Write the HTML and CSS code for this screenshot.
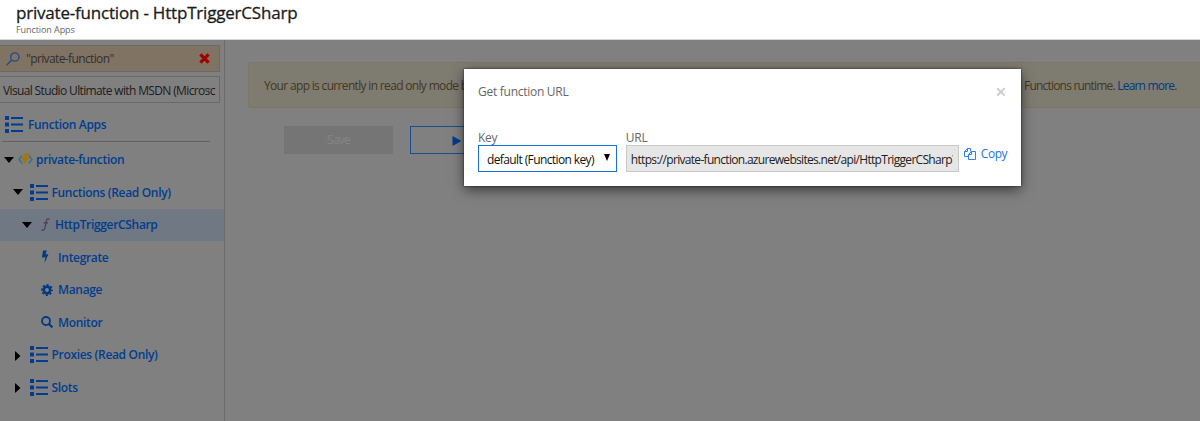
FILE: index.html
```html
<!DOCTYPE html>
<html lang="en">
<head>
<meta charset="utf-8">
<title>private-function - HttpTriggerCSharp</title>
<link rel="stylesheet" href="styles.css">
</head>
<body>
<svg width="0" height="0" class="defs">
  <symbol id="list" viewBox="0 0 18 17"><path d="M0 0h4v4H0zM0 6.5h4v4H0zM0 13h4v4H0zM6 1h12v2H6zM6 7.5h12v2H6zM6 14h12v2H6z" fill="currentColor"/></symbol>
</svg>
<header class="header">
  <h1 class="title">private-function - HttpTriggerCSharp</h1>
  <div class="subtitle">Function Apps</div>
</header>
<div class="body">
  <nav class="sidebar">
    <div class="search">
      <svg class="search-icon" width="14" height="14" viewBox="0 0 14 14" fill="none" stroke="#1d4c8c" stroke-width="1.3"><circle cx="8.8" cy="5" r="4.2"/><path d="M5.8 8L.5 13.2"/></svg>
      <span class="search-text">"private-function"</span>
      <svg class="clear" width="11" height="11" viewBox="0 0 10 10"><path d="M1.300 1.300l7.400 7.400M8.700 1.300l-7.400 7.400" stroke="#a30000" stroke-width="3"/></svg>
    </div>
    <div class="subs"><span class="subs-text">Visual Studio Ultimate with MSDN (Microsc</span><svg class="chev" width="8" height="6" viewBox="0 0 8 6"><path d="M.5 1L4 4.5 7.5 1" fill="none" stroke="#5d5d5d" stroke-width="1.200"/></svg></div>
    <div class="apps"><svg class="list" width="18" height="17"><use href="#list"/></svg><span class="label">Function Apps</span></div>
    <div class="row l1"><svg class="down" width="10" height="6" viewBox="0 0 10 6"><path d="M0 0h10L5 6z"/></svg>
      <svg class="bolt" width="15" height="13" viewBox="0 0 15 13"><path d="M4.200 2.500L.9 6.500l3.300 4M10.800 2.500l3.300 4-3.300 4" fill="none" stroke="#2b7687" stroke-width="1.400"/><path d="M7 0h4.300L8.500 4.800h3L4 13l2.300-5.600H3.500z" fill="#a87405"/></svg><span class="label">private-function</span></div>
    <div class="row l2"><svg class="down" width="10" height="6" viewBox="0 0 10 6"><path d="M0 0h10L5 6z"/></svg><svg class="list" width="18" height="17"><use href="#list"/></svg><span class="label">Functions (Read Only)</span></div>
    <div class="row l3 selected"><svg class="down" width="10" height="6" viewBox="0 0 10 6"><path d="M0 0h10L5 6z"/></svg><svg class="fx" width="9" height="13" viewBox="0 0 9 13" fill="none" stroke="#543568" stroke-width="1.2"><path d="M8.500 1.500C7 0 5.700 1 5.300 3L4 9.500C3.600 11.700 2.200 13 .5 11.800M2.500 4.800h4.500"/></svg><span class="label">HttpTriggerCSharp</span></div>
    <div class="row l4"><svg width="12" height="14" viewBox="0 0 12 14"><path d="M2 .5h3.800L4.500 4.500l3-.6L3.600 13l.7-6L1 7.800z" fill="#003a83"/></svg><span class="label">Integrate</span></div>
    <div class="row l4"><svg width="12" height="12" viewBox="0 0 12 12" fill="none" stroke="#003a83"><circle cx="6" cy="6" r="3.200" stroke-width="2.600"/><circle cx="6" cy="6" r="5" stroke-width="1.800" stroke-dasharray="2.200 1.727" stroke-dashoffset="1.100"/></svg><span class="label">Manage</span></div>
    <div class="row l4"><svg width="12" height="12" viewBox="0 0 12 12" fill="none" stroke="#003a83" stroke-width="1.800"><circle cx="5" cy="5" r="4"/><path d="M8 8l3.400 3.400" stroke-width="2.200"/></svg><span class="label">Monitor</span></div>
    <div class="row l2"><svg class="right" width="6" height="10" viewBox="0 0 6 10"><path d="M0 0v10l5.500-5z"/></svg><svg class="list" width="18" height="17"><use href="#list"/></svg><span class="label">Proxies (Read Only)</span></div>
    <div class="row l2"><svg class="right" width="6" height="10" viewBox="0 0 6 10"><path d="M0 0v10l5.500-5z"/></svg><svg class="list" width="18" height="17"><use href="#list"/></svg><span class="label">Slots</span></div>
  </nav>
  <main class="main">
    <div class="banner"><span class="lead">Your app is currently in read only mode b</span><span class="runtime">Functions runtime. <a>Learn more</a>.</span></div>
    <div class="buttons"><div class="save">Save</div><div class="run"><svg width="10" height="10" viewBox="0 0 10 10"><path d="M.5 0v10L9.500 5z" fill="#003c8c"/></svg></div></div>
  </main>
</div>
<section class="modal">
  <div class="modal-head"><span>Get function URL</span><svg width="10" height="10" viewBox="0 0 10 10"><path d="M1.200 1.200l7.400 7.400M8.600 1.200L1.200 8.600" stroke="#c9c9c9" stroke-width="1.800"/></svg></div>
  <div class="fields">
    <div class="key"><label>Key</label><div class="select"><span>default (Function key)</span><svg width="6" height="7" viewBox="0 0 6 7"><path d="M0 0h6L3 7z"/></svg></div></div>
    <div class="url"><label>URL</label><div class="input"><span>https://private-function.azurewebsites.net/api/HttpTriggerCSharp?</span></div></div>
    <a class="copy"><svg width="12" height="12" viewBox="0 0 12 12" fill="none" stroke="#2f80ed"><path d="M4.500 8.500h-4v-5l3-3h3v3M3.500.5v3h-3M4.500 11.500v-5l3-3h4v8zM7.500 3.500v3h-3"/></svg><span>Copy</span></a>
  </div>
</section>
</body>
</html>
```
FILE: styles.css
```css
* { box-sizing: border-box; }
body { margin: 0; width: 1200px; height: 421px; overflow: hidden; background: #808080; font: 12px/16px "Open Sans", "Noto Sans", sans-serif; }
svg { display: block; flex: none; }
span { white-space: pre; }
.defs { position: absolute; }
.header { height: 40px; padding: 2px 16px 0; background: #fff; border-bottom: 1px solid #d4d4d4; }
.title { margin: 0; font-size: 17px; line-height: 22px; font-weight: 500; letter-spacing: -.2px; color: #1b1b1b; -webkit-text-stroke: .3px #1b1b1b; }
.subtitle { font-size: 9px; line-height: 11px; letter-spacing: -.08px; color: #666; }
.body { display: flex; height: 381px; }
.sidebar { width: 225px; flex: none; border-right: 1px solid #6c6c6c; padding-top: 5px; color: #003d8f; font-weight: 600; }
.search, .subs { width: 220px; height: 27px; border: 1px solid #696969; border-left: 0; display: flex; align-items: center; }
.search { background: #807364; color: #303030; font-weight: 400; padding: 0 9px 0 6px; }
.search-text { margin-left: 6px; padding-top: 1px; letter-spacing: -.62px; }
.clear { margin-left: auto; }
.subs { margin-top: 4px; padding: 2px 0 0 3px; color: #1c1c1c; font-weight: 400; position: relative; letter-spacing: -.64px; }
.chev { position: absolute; right: 8px; top: 10px; }
.apps { margin: 0 14px 0 2px; height: 39px; border-bottom: 1px solid #636363; display: flex; align-items: center; padding: 5px 0 0 3px; gap: 5px; }
.label { letter-spacing: -.33px; padding-top: 1px; }
.row { height: 32.5px; display: flex; align-items: center; }
.apps + .row { margin-top: 1.5px; }
.l1 { padding-left: 4px; }
.bolt { margin: 0 3px 0 4px; }
.l2 { padding-left: 13px; }
.l2 .list { margin: 0 3.5px 0 7px; }
.l2 .right { margin: 2px 2px 0; }
.l3 { padding-left: 22px; }
.fx { margin: 0 5px 0 9px; }
.l4 { padding-left: 41px; gap: 5px; }
.selected { background: #6f7883; }
.main { flex: 1; padding: 22px 0 0 23px; }
.banner { height: 46px; background: #7e7b71; border: 1px solid #7d7565; border-right: 0; border-radius: 3px 0 0 3px; display: flex; align-items: center; padding: 2px 0 0 15px; color: #45361e; letter-spacing: -.67px; }
.lead { width: 760px; flex: none; }
.runtime { letter-spacing: -.8px; }
.banner a { color: #00397f; }
.buttons { display: flex; padding: 18px 0 0 36px; gap: 17px; }
.save { width: 109px; height: 28px; background: #757575; color: #858585; display: flex; align-items: center; justify-content: center; letter-spacing: -.8px; }
.run { width: 109px; height: 28px; border: 1px solid #174d93; padding: 9px 0 0 41px; }
.modal { position: absolute; left: 464px; top: 69px; width: 557px; height: 117px; background: #fff; box-shadow: 0 4px 12px rgba(0,0,0,.55), 0 0 2px rgba(0,0,0,.7); padding: 14px 14px 0; color: #666; letter-spacing: -.27px; }
.modal-head { display: flex; justify-content: space-between; align-items: center; height: 18px; padding-right: 1px; }
.fields { display: flex; margin-top: 29px; }
.fields label { display: block; height: 15px; line-height: 16px; }
.key { width: 139px; margin-right: 9px; }
.url { width: 333px; }
.select { height: 27px; border: 1px solid #1a6fe0; color: #111; display: flex; align-items: center; justify-content: space-between; padding: 2px 6px 0 8px; letter-spacing: -.61px; }
.select svg { margin-top: -5px; }
.input { height: 27px; border: 1px solid #c8c8c8; background: #e6e6e6; color: #222; display: flex; align-items: center; padding: 2px 5px 0 4px; }
.input span { overflow: hidden; letter-spacing: -.69px; }
.copy { display: flex; gap: 5px; margin: 16px 0 0 5px; height: 16px; align-items: center; color: #1c73e8; letter-spacing: -.5px; }
```
